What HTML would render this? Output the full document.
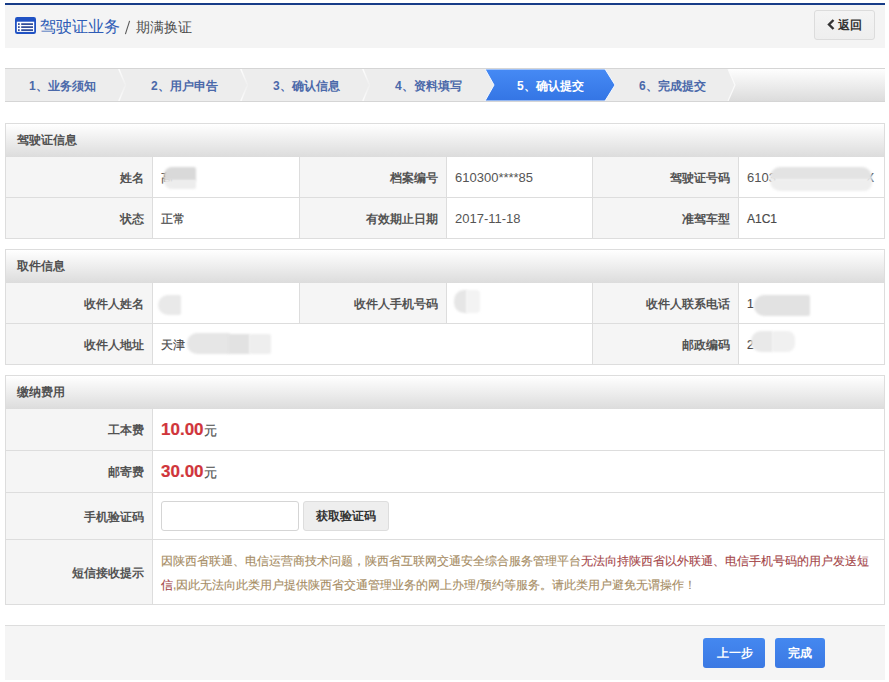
<!DOCTYPE html>
<html><head><meta charset="utf-8">
<style>
*{box-sizing:border-box;margin:0;padding:0}
html,body{width:889px;height:682px;overflow:hidden;background:#fff}
body{font-family:"Liberation Sans",sans-serif;font-size:12px;color:#555;position:relative}
div,span.a,svg{position:absolute}
span{white-space:nowrap}
#topline{left:5px;top:3px;width:880px;height:2px;background:#173c88}
#hdr{left:5px;top:5px;width:880px;height:43px;background:#f4f4f4}
#icon{left:15px;top:17px;width:21px;height:17px}
#t1{left:40px;top:15px;font-size:16.2px;color:#2e5cb6;line-height:22px;white-space:nowrap}
#t2{left:125px;top:16px;font-size:15px;color:#555;line-height:22px;white-space:nowrap}
#t3{left:136px;top:16px;font-size:14px;color:#4c4c4c;line-height:22px;white-space:nowrap}
#back{left:814px;top:10px;width:61px;height:30px;border:1px solid #dcdcdc;border-radius:3px;background:linear-gradient(#f4f4f4,#eeeeee)}
#back span{position:absolute;left:23px;top:0;line-height:28px;font-size:12px;font-weight:bold;color:#333}
#steps{left:5px;top:68px;width:880px;height:34px;border-top:1px solid #d5d5d5;border-bottom:1px solid #d5d5d5;background:linear-gradient(#fefefe,#dcdcdc)}
.step{top:0;height:32px;line-height:34px;font-weight:bold;color:#4b69aa;white-space:nowrap}
.box{left:5px;width:880px;border:1px solid #dddddd;background:#fff}
.sh{left:0;top:0;width:878px;height:33px;line-height:33px;padding-left:11px;background:linear-gradient(#ffffff,#dcdcdc);color:#505050;font-weight:bold;white-space:nowrap}
.hl{left:0;width:878px;height:1px;background:#dddddd}
.vl{width:1px;background:#dddddd}
.lab{background:#f5f5f5}
.lt{padding-top:1px;text-align:right;font-weight:bold;color:#525252;white-space:nowrap}
.vt{padding-top:1px;color:#4a4a4a;-webkit-text-stroke:0.2px currentColor;white-space:nowrap}
.blur{background:#dedede;filter:blur(2px);border-radius:6px}
.price{font-size:17px;font-weight:bold;color:#d0353b}
.yuan{font-size:13px;color:#555}
#foot{left:5px;top:625px;width:880px;height:55px;border-top:1px solid #dddddd;background:#f5f5f5}
.btn{top:638px;height:30px;border-radius:3px;background:linear-gradient(#4488f0,#3b79e3);color:#fff;font-weight:bold;font-size:12px;line-height:30px;text-align:center}
.tip{-webkit-text-stroke:0.12px currentColor;color:#a68c63;white-space:nowrap;line-height:24px}
.red{color:#a5474a}
</style></head><body>
<div id="topline"></div>
<div id="hdr"></div>
<svg id="icon" viewBox="0 0 21 17"><rect x="0" y="0" width="21" height="17" rx="2.2" fill="#2052c4"/><rect x="1.8" y="4.7" width="17.4" height="10.2" fill="#fff"/><g fill="#1f3c8f"><rect x="3" y="6.3" width="1.7" height="1.6"/><rect x="6.2" y="6.3" width="11.8" height="1.6"/><rect x="3" y="9.3" width="1.7" height="1.6"/><rect x="6.2" y="9.3" width="11.8" height="1.6"/><rect x="3" y="12.3" width="1.7" height="1.6"/><rect x="6.2" y="12.3" width="11.8" height="1.6"/></g></svg>
<div id="t1">驾驶证业务</div>
<svg style="left:124px;top:20px" width="7" height="15" viewBox="0 0 7 15"><path d="M5.6 0.8 L1.4 14.2" stroke="#5a5a5a" stroke-width="1.1" fill="none"/></svg>
<div id="t3">期满换证</div>
<div id="back"><svg style="left:12px;top:8px" width="8" height="11" viewBox="0 0 8 11"><path d="M6.5 1 L2 5.5 L6.5 10" fill="none" stroke="#333" stroke-width="2.4"/></svg><span>返回</span></div>

<div id="steps">
 <svg style="left:0;top:0" width="880" height="32">
  <defs><linearGradient id="bg5" x1="0" y1="0" x2="0" y2="1"><stop offset="0" stop-color="#468af4"/><stop offset="1" stop-color="#3475e4"/></linearGradient>
  <linearGradient id="sep" x1="0" y1="0" x2="0" y2="1"><stop offset="0" stop-color="#fff" stop-opacity="0.9"/><stop offset="0.5" stop-color="#fff" stop-opacity="0.15"/><stop offset="1" stop-color="#fff" stop-opacity="0.8"/></linearGradient></defs>
  <path d="M0 0 H723 L730 16 L723 32 H0 Z" fill="#ededed"/>
  <path d="M723 0 L730 16 L723 32" fill="none" stroke="#fafafa" stroke-width="1.2"/>
  <path d="M113.8 0 L120.5 16 L113.8 32" fill="none" stroke="url(#sep)" stroke-width="1.5"/>
  <path d="M235.8 0 L242.5 16 L235.8 32" fill="none" stroke="url(#sep)" stroke-width="1.5"/>
  <path d="M357.8 0 L364.5 16 L357.8 32" fill="none" stroke="url(#sep)" stroke-width="1.5"/>
  <path d="M480 0 H600 L610 16 L600 32 H480 L489 16 Z" fill="url(#bg5)" stroke="#f4f8ff" stroke-width="1"/>
 </svg>
 <div class="step" style="left:24px">1、业务须知</div>
 <div class="step" style="left:146px">2、用户申告</div>
 <div class="step" style="left:268px">3、确认信息</div>
 <div class="step" style="left:390px">4、资料填写</div>
 <div class="step" style="left:512px;color:#fff">5、确认提交</div>
 <div class="step" style="left:634px">6、完成提交</div>
</div>

<!-- section 1 -->
<div class="box" style="top:123px;height:116px">
 <div class="sh">驾驶证信息</div>
 <div class="lab" style="left:0;top:33px;width:146px;height:81px"></div>
 <div class="lab" style="left:294px;top:33px;width:146px;height:81px"></div>
 <div class="lab" style="left:587px;top:33px;width:145px;height:81px"></div>
 <div class="hl" style="top:73px"></div>
 <div class="vl" style="left:146px;top:33px;height:81px"></div>
 <div class="vl" style="left:293px;top:33px;height:81px"></div>
 <div class="vl" style="left:440px;top:33px;height:81px"></div>
 <div class="vl" style="left:586px;top:33px;height:81px"></div>
 <div class="vl" style="left:732px;top:33px;height:81px"></div>
 <div class="lt" style="right:740px;top:33px;line-height:40px">姓名</div>
 <div class="lt" style="right:446px;top:33px;line-height:40px">档案编号</div>
 <div class="lt" style="right:154px;top:33px;line-height:40px">驾驶证号码</div>
 <div class="lt" style="right:740px;top:74px;line-height:40px">状态</div>
 <div class="lt" style="right:446px;top:74px;line-height:40px">有效期止日期</div>
 <div class="lt" style="right:154px;top:74px;line-height:40px">准驾车型</div>
 <div class="vt" style="left:155px;top:33px;line-height:40px">高</div>
 <div class="vt" style="left:449px;top:33px;line-height:40px;font-size:13px;padding-top:1px;color:#555;-webkit-text-stroke:0">610300****85</div>
 <div class="vt" style="left:741px;top:33px;line-height:40px;font-size:13px;padding-top:1px;color:#555;-webkit-text-stroke:0">6103</div>
 <div class="vt" style="left:860px;top:33px;line-height:40px">X</div>
 <div class="vt" style="left:155px;top:74px;line-height:40px">正常</div>
 <div class="vt" style="left:449px;top:74px;line-height:40px;font-size:13px;padding-top:1px;color:#555;-webkit-text-stroke:0">2017-11-18</div>
 <div class="blur" style="left:158px;top:43px;width:32px;height:14px;background:#d9d9d9;filter:blur(1px);border-radius:8px 2px 0 0"></div>
 <div class="blur" style="left:158px;top:56px;width:32px;height:9px;background:#ededed;filter:blur(1px);border-radius:0 0 2px 8px"></div>
 <div class="blur" style="left:764px;top:43px;width:102px;height:13px;background:#e3e3e3;filter:blur(1px);border-radius:10px 10px 0 0"></div>
 <div class="blur" style="left:764px;top:55px;width:102px;height:12px;background:#eeeeee;filter:blur(1px);border-radius:0 0 8px 10px"></div>
 <div class="vt" style="left:741px;top:74px;line-height:40px">A1C1</div>
</div>

<!-- section 2 -->
<div class="box" style="top:249px;height:116px">
 <div class="sh">取件信息</div>
 <div class="lab" style="left:0;top:33px;width:146px;height:81px"></div>
 <div class="lab" style="left:294px;top:33px;width:146px;height:40px"></div>
 <div class="lab" style="left:587px;top:33px;width:145px;height:81px"></div>
 <div class="hl" style="top:73px"></div>
 <div class="vl" style="left:146px;top:33px;height:81px"></div>
 <div class="vl" style="left:293px;top:33px;height:40px"></div>
 <div class="vl" style="left:440px;top:33px;height:40px"></div>
 <div class="vl" style="left:586px;top:33px;height:81px"></div>
 <div class="vl" style="left:732px;top:33px;height:81px"></div>
 <div class="lt" style="right:740px;top:33px;line-height:40px">收件人姓名</div>
 <div class="lt" style="right:446px;top:33px;line-height:40px">收件人手机号码</div>
 <div class="lt" style="right:154px;top:33px;line-height:40px">收件人联系电话</div>
 <div class="lt" style="right:740px;top:74px;line-height:40px">收件人地址</div>
 <div class="lt" style="right:154px;top:74px;line-height:40px">邮政编码</div>
 <div class="vt" style="left:741px;top:33px;line-height:40px">1</div>
 <div class="vt" style="left:155px;top:74px;line-height:40px">天津</div>
 <div class="vt" style="left:741px;top:74px;line-height:40px">2</div>
 <div class="vt" style="left:199px;top:74px;line-height:40px">市</div>
 <div class="blur" style="left:152px;top:45px;width:23px;height:20px;background:#e9e9e9;filter:blur(1px);border-radius:10px 2px 2px 10px"></div>
 <div class="blur" style="left:448px;top:40px;width:13px;height:23px;background:#e6e6e6;filter:blur(1px);border-radius:10px 0 0 10px"></div>
 <div class="blur" style="left:460px;top:40px;width:14px;height:23px;background:#f3f3f3;filter:blur(1px);border-radius:0 4px 4px 0"></div>
 <div class="blur" style="left:748px;top:45px;width:56px;height:21px;background:#e2e2e2;filter:blur(1px);border-radius:10px 2px 2px 10px"></div>
 <div class="blur" style="left:181px;top:83px;width:43px;height:21px;background:#e6e6e6;filter:blur(1px);border-radius:10px 2px 2px 10px"></div>
 <div class="blur" style="left:222px;top:84px;width:22px;height:20px;background:#e2e2e2;filter:blur(1px);border-radius:2px"></div>
 <div class="blur" style="left:243px;top:84px;width:22px;height:20px;background:#eeeeee;filter:blur(1px);border-radius:2px"></div>
 <div class="blur" style="left:745px;top:81px;width:22px;height:21px;background:#e9e9e9;filter:blur(1px);border-radius:10px 2px 2px 10px"></div>
 <div class="blur" style="left:766px;top:81px;width:23px;height:21px;background:#f0f0f0;filter:blur(1px);border-radius:2px 8px 8px 2px"></div>
</div>

<!-- section 3 -->
<div class="box" style="top:375px;height:230px">
 <div class="sh">缴纳费用</div>
 <div class="lab" style="left:0;top:33px;width:146px;height:195px"></div>
 <div class="vl" style="left:146px;top:33px;height:195px"></div>
 <div class="hl" style="top:74px"></div>
 <div class="hl" style="top:116px"></div>
 <div class="hl" style="top:163px"></div>
 <div class="lt" style="right:740px;top:33px;line-height:41px">工本费</div>
 <div class="lt" style="right:740px;top:75px;line-height:41px">邮寄费</div>
 <div class="lt" style="right:740px;top:117px;line-height:46px">手机验证码</div>
 <div class="lt" style="right:740px;top:164px;line-height:64px">短信接收提示</div>
 <div class="vt" style="left:155px;top:33px;line-height:41px;padding-top:0"><span class="price">10.00</span><span class="yuan">元</span></div>
 <div class="vt" style="left:155px;top:75px;line-height:41px;padding-top:0"><span class="price">30.00</span><span class="yuan">元</span></div>
 <div style="left:155px;top:125px;width:138px;height:30px;border:1px solid #d5d5d5;border-radius:3px;background:#fff"></div>
 <div style="left:297px;top:125px;width:86px;height:30px;border:1px solid #dddddd;border-radius:3px;background:#eeeeee;color:#333;font-weight:bold;line-height:28px;text-align:center">获取验证码</div>
 <div class="tip" style="left:155px;top:173px">因陕西省联通、电信运营商技术问题，陕西省互联网交通安全综合服务管理平台<span class="red">无法向持陕西省以外联通、电信手机号码的用户发送短</span></div>
 <div class="tip" style="left:155px;top:197px"><span class="red">信</span>,因此无法向此类用户提供陕西省交通管理业务的网上办理/预约等服务。请此类用户避免无谓操作！</div>
</div>

<div id="foot"></div>
<div class="btn" style="left:703px;width:62px;padding-left:2px">上一步</div>
<div class="btn" style="left:775px;width:50px">完成</div>
</body></html>
